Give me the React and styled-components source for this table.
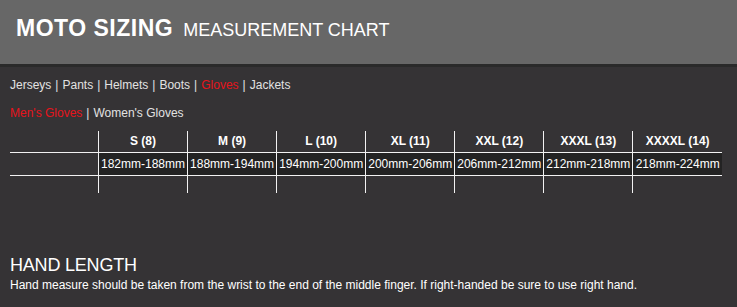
import React from "react";
import styled, { createGlobalStyle } from "styled-components";

/** Data */
const sections = ["Jerseys", "Pants", "Helmets", "Boots", "Gloves", "Jackets"];
const subSections = ["Men's Gloves", "Women's Gloves"];
const sizes = [
  { label: "S (8)", range: "182mm-188mm" },
  { label: "M (9)", range: "188mm-194mm" },
  { label: "L (10)", range: "194mm-200mm" },
  { label: "XL (11)", range: "200mm-206mm" },
  { label: "XXL (12)", range: "206mm-212mm" },
  { label: "XXXL (13)", range: "212mm-218mm" },
  { label: "XXXXL (14)", range: "218mm-224mm" },
];

const GlobalStyle = createGlobalStyle`
  html, body {
    margin: 0;
    padding: 0;
    background: #353335;
  }
  body {
    font-family: "Liberation Sans", Arial, sans-serif;
    color: #fff;
  }
`;

const Page = styled.div`
  width: 737px;
  height: 307px;
  background: #353335;
  overflow: hidden;
`;

const Header = styled.header`
  height: 67px;
  background: #676767;
  border-bottom: 3px solid #2a2a2a;
  display: flex;
  align-items: baseline;
  gap: 10px;
  padding: 0 0 0 16px;
  box-sizing: border-box;
`;

const Title = styled.h1`
  margin: 14px 0 0;
  font-size: 23px;
  line-height: 28px;
  font-weight: bold;
  color: #fff;
  letter-spacing: 0.5px;
`;

const Subtitle = styled.span`
  font-size: 18px;
  color: #fff;
`;

const Body = styled.main`
  padding: 10px 10px 0;
`;

const Nav = styled.nav`
  font-size: 12px;
  line-height: 16px;
  color: #e2e2e2;
  margin-bottom: ${({ gap }) => gap || 0}px;
`;

const NavItem = styled.span`
  color: ${({ active }) => (active ? "#e6141c" : "#e2e2e2")};
`;

const Sep = styled.span`
  color: #e2e2e2;
  padding: 0 4px;
`;

const Chart = styled.table`
  margin-top: 10px;
  border-collapse: collapse;
  table-layout: fixed;
  width: 712px;
  font-size: 12px;
  color: #fff;
`;

const Row = styled.tr`
  height: ${({ h }) => h}px;
  border-bottom: ${({ line }) => (line ? "1px solid #f2f2f2" : "none")};
`;

const Cell = styled.td`
  padding: 0;
  text-align: center;
  white-space: nowrap;
  font-weight: ${({ head }) => (head ? "bold" : "normal")};
  background: ${({ dark }) => (dark ? "#232323" : "transparent")};
  border-left: ${({ first }) => (first ? "none" : "1px solid #f2f2f2")};
  width: ${({ first }) => (first ? "88px" : "auto")};
`;

const Info = styled.section`
  margin-top: 62px;
`;

const InfoTitle = styled.h2`
  margin: 0;
  font-size: 18px;
  line-height: 20px;
  font-weight: normal;
  letter-spacing: -0.2px;
  color: #fff;
`;

const InfoText = styled.p`
  margin: 2px 0 0;
  font-size: 12px;
  line-height: 16px;
  color: #fff;
`;

function LinkList({ items, active, gap }) {
  return (
    <Nav gap={gap}>
      {items.map((item, i) => (
        <React.Fragment key={item}>
          {i > 0 && <Sep>|</Sep>}
          <NavItem active={item === active}>{item}</NavItem>
        </React.Fragment>
      ))}
    </Nav>
  );
}

export default function App() {
  return (
    <Page>
      <GlobalStyle />
      <Header>
        <Title>MOTO SIZING</Title>
        <Subtitle>MEASUREMENT CHART</Subtitle>
      </Header>
      <Body>
        <LinkList items={sections} active="Gloves" gap={12} />
        <LinkList items={subSections} active="Men's Gloves" />
        <Chart>
          <tbody>
            <Row h={21} line>
              <Cell first />
              {sizes.map((s) => (
                <Cell head key={s.label}>
                  {s.label}
                </Cell>
              ))}
            </Row>
            <Row h={23} line>
              <Cell first />
              {sizes.map((s) => (
                <Cell dark key={s.range}>
                  {s.range}
                </Cell>
              ))}
            </Row>
            <Row h={18}>
              <Cell first />
              {sizes.map((s) => (
                <Cell key={s.label} />
              ))}
            </Row>
          </tbody>
        </Chart>
        <Info>
          <InfoTitle>HAND LENGTH</InfoTitle>
          <InfoText>
            Hand measure should be taken from the wrist to the end of the middle
            finger. If right-handed be sure to use right hand.
          </InfoText>
        </Info>
      </Body>
    </Page>
  );
}
